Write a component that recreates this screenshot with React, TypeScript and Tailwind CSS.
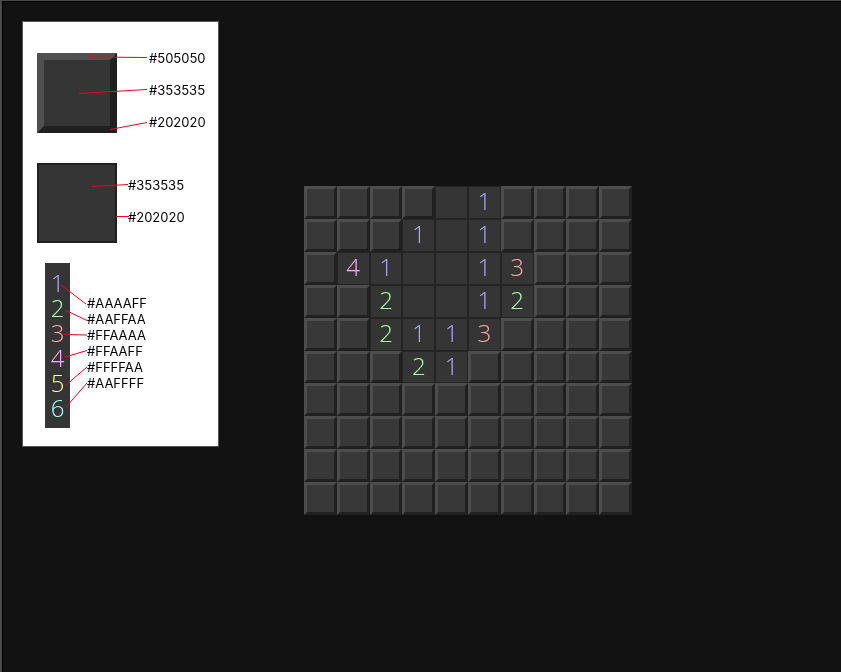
import React from "react";

const BOARD = [
  "####.1####",
  "###1.1####",
  "#41..13###",
  "##2..12###",
  "##2113####",
  "###21#####",
  "##########",
  "##########",
  "##########",
  "##########",
];

const DIGIT_COLORS: Record<string, string> = {
  "1": "text-[#aaaaff]",
  "2": "text-[#aaffaa]",
  "3": "text-[#ffaaaa]",
  "4": "text-[#ffaaff]",
  "5": "text-[#ffffaa]",
  "6": "text-[#aaffff]",
};

const DIGIT_LABELS = ["#AAAAFF", "#AAFFAA", "#FFAAAA", "#FFAAFF", "#FFFFAA", "#AAFFFF"];

function Cell({ value, row, col }: { value: string; row: number; col: number }) {
  const place = `Row ${row + 1}, column ${col + 1}`;
  if (value === "#") {
    return (
      <button
        type="button"
        aria-label={`${place}, covered`}
        className="border-[3px] border-t-[#4d4d4d] border-r-[#202020] border-b-[#202020] border-l-[#4d4d4d] bg-[#383838]"
      />
    );
  }
  return (
    <button
      type="button"
      aria-label={`${place}, open`}
      className={`flex items-center justify-center border border-[#242424] bg-[#353535] pb-0.5 font-['Open_Sans',sans-serif] text-2xl leading-6 font-light ${DIGIT_COLORS[value] ?? ""}`}
    >
      {value === "." ? "" : value}
    </button>
  );
}

function Pointers() {
  return (
    <svg
      className="pointer-events-none absolute top-0 left-0"
      width="195"
      height="424"
      viewBox="23 22 195 424"
      fill="none"
      stroke="#f5001d"
      strokeWidth="1"
      aria-hidden="true"
    >
      <path d="M89 57L147 57.5" />
      <path d="M79 93.5L147 89.5" />
      <path d="M110 129.5L147 122.5" />
      <path d="M92 186.5L128 184.5" />
      <path d="M116 216.5H129" />
      <path d="M61 285L86 304" />
      <path d="M65 310L87 320.5" />
      <path d="M65 334.5L87 335" />
      <path d="M65 357L87 350.5" />
      <path d="M66 385L87 367" />
      <path d="M66 407L87 383" />
    </svg>
  );
}

function Legend() {
  return (
    <aside className="relative w-[197px] shrink-0 border border-[#555555] bg-white px-3.5 pt-7 pb-[18px] text-[13px] leading-4 text-black">
      <div className="flex items-start gap-8">
        <div className="mt-[3px] size-20 shrink-0 border-[7px] border-t-[#505050] border-r-[#202020] border-b-[#202020] border-l-[#505050] bg-[#353535]" />
        <ul className="flex flex-col gap-4">
          <li>#505050</li>
          <li>#353535</li>
          <li>#202020</li>
        </ul>
      </div>
      <div className="mt-[30px] flex gap-[11px]">
        <div className="size-20 shrink-0 border-2 border-[#202020] bg-[#353535]" />
        <ul className="flex flex-col gap-4 pt-3.5">
          <li>#353535</li>
          <li>#202020</li>
        </ul>
      </div>
      <div className="mt-5 ml-2 flex gap-[17px]">
        <ol className="w-[25px] bg-[#353535] pt-[7px] pb-2 text-center font-['Open_Sans',sans-serif] text-2xl leading-[25px] font-light">
          {DIGIT_LABELS.map((label, i) => (
            <li key={label} className={DIGIT_COLORS[String(i + 1)]}>
              {i + 1}
            </li>
          ))}
        </ol>
        <ul className="pt-8">
          {DIGIT_LABELS.map((label) => (
            <li key={label}>{label}</li>
          ))}
        </ul>
      </div>
      <Pointers />
    </aside>
  );
}

export default function App() {
  return (
    <div className="min-h-screen border-t border-l-2 border-[#4a4a4a] bg-[#121212] font-[Inter,sans-serif] shadow-[inset_1px_1px_0_#000000]">
      <main className="flex items-start gap-[85px] px-5 py-5 will-change-transform">
        <Legend />
        <section
          aria-label="Minesweeper board"
          className="mt-[165px] grid h-[329px] w-[328px] shrink-0 grid-cols-10 grid-rows-10"
        >
          {BOARD.flatMap((line, row) =>
            line.split("").map((value, col) => (
              <Cell key={`${row}-${col}`} value={value} row={row} col={col} />
            ))
          )}
        </section>
      </main>
    </div>
  );
}
